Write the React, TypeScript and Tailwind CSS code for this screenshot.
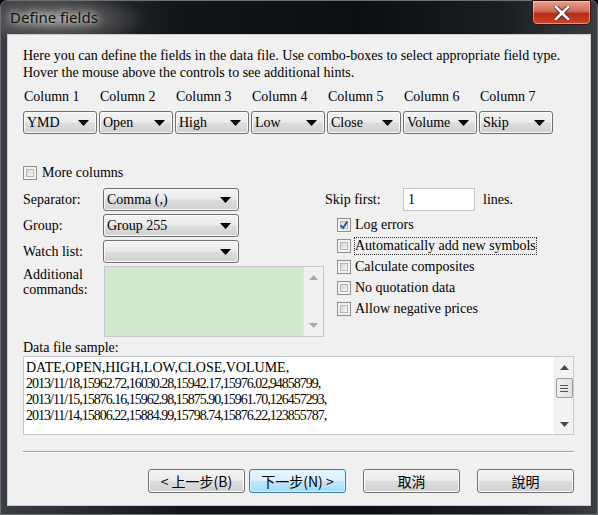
import React from "react";

const comboBg =
  "bg-[linear-gradient(to_bottom,#f3f3f3_0%,#ebebeb_48%,#dddddd_52%,#d0d0d0_100%)]";

function Arrow() {
  return (
    <svg width="11" height="6" viewBox="0 0 11 6" className="ml-auto mr-[7px] shrink-0">
      <path d="M0 0 H11 L5.5 6 Z" fill="#000" />
    </svg>
  );
}

function Combo({ value, className = "" }: { value: string; className?: string }) {
  return (
    <div
      className={`flex h-[23px] items-center rounded-[3px] border border-[#707070] ${comboBg} shadow-[inset_0_0_0_1px_#fbfbfb] pl-[3px] text-[14px] leading-none ${className}`}
    >
      <span className="whitespace-nowrap">{value}</span>
      <Arrow />
    </div>
  );
}

function CheckBox({ checked = false }: { checked?: boolean }) {
  return (
    <div className="relative h-[14px] w-[14px] shrink-0 border border-[#8e8f8f] bg-[#f4f4f4]">
      <div className="absolute inset-[2px] border border-[#b8b8b8] bg-[linear-gradient(135deg,#d5d5d5,#f6f6f6)]" />
      {checked && (
        <svg viewBox="0 0 14 14" className="absolute inset-0 h-full w-full">
          <path d="M3 7.5 L5.8 10.5 L11 3" stroke="#2d4f9e" strokeWidth="2.2" fill="none" />
        </svg>
      )}
    </div>
  );
}

function Check({ label, checked, focus }: { label: string; checked?: boolean; focus?: boolean }) {
  return (
    <div className="flex h-[21px] items-center">
      <CheckBox checked={checked} />
      <span
        className={`ml-[4px] whitespace-nowrap text-[14px] leading-[16px] ${
          focus ? "outline outline-1 outline-dotted outline-[#333]" : ""
        }`}
      >
        {label}
      </span>
    </div>
  );
}

function Btn({ label, primary = false }: { label: string; primary?: boolean }) {
  return (
    <div
      className={`flex h-[24px] w-[97px] items-center justify-center rounded-[3px] border text-[14px] font-['Noto_Sans_CJK_TC',sans-serif] ${
        primary
          ? "border-[#3c7fb1] bg-[linear-gradient(to_bottom,#eaf6fd_0%,#d9f0fc_48%,#bee6fd_52%,#a7d9f5_100%)] shadow-[inset_0_0_0_1px_#d2f1ff]"
          : `border-[#707070] ${comboBg} shadow-[inset_0_0_0_1px_#fbfbfb]`
      }`}
    >
      {label}
    </div>
  );
}

export default function App() {
  const cols = [
    ["Column 1", "YMD"],
    ["Column 2", "Open"],
    ["Column 3", "High"],
    ["Column 4", "Low"],
    ["Column 5", "Close"],
    ["Column 6", "Volume"],
    ["Column 7", "Skip"],
  ];

  return (
    <div className="h-[515px] w-[598px] overflow-hidden bg-black font-['Liberation_Serif','Noto_Sans_CJK_TC',serif] text-black">
      <div className="flex h-full w-full flex-col rounded-t-[7px] border border-[#6c7074] bg-[radial-gradient(ellipse_95px_26px_at_52px_18px,#8d8d8d_0%,#555_45%,transparent_100%),linear-gradient(to_right,#3b3e42_0%,#121519_30%,#0b0e12_60%,#1b1e22_85%,#3a3d41_100%)]">
        {/* title bar */}
        <div className="flex h-[33px] shrink-0 items-start">
          <div className="ml-[9px] mt-[6px] font-['Noto_Sans',sans-serif] text-[15px] leading-[20px] text-[#111] [text-shadow:0_0_6px_#ddd,0_0_10px_#bbb]">
            Define fields
          </div>
          <div className="ml-auto mr-[6px] mt-[-1px] flex h-[25px] w-[59px] items-center justify-center rounded-b-[5px] border border-[#3b0f0a] bg-[linear-gradient(to_bottom,#e8a491_0%,#cf6a55_45%,#b62b12_55%,#c8462b_100%)] shadow-[inset_0_0_0_1px_rgba(255,220,210,0.5)]">
            <svg width="16" height="14" viewBox="0 0 16 14">
              <path d="M2 1 L14 13 M14 1 L2 13" stroke="#3a1a14" strokeWidth="4.4" strokeLinecap="square" />
              <path d="M2 1 L14 13 M14 1 L2 13" stroke="#fff" strokeWidth="2.8" strokeLinecap="square" />
            </svg>
          </div>
        </div>

        {/* client */}
        <div className="ml-[6px] h-[472px] w-[584px] border border-[#c9cdd2] bg-[#f0f0f0] pl-[15px] pr-[17px] pt-[12px]">
          <p className="text-[14px] leading-[17px]">
            Here you can define the fields in the data file. Use combo-boxes to select appropriate field type.
            <br />
            Hover the mouse above the controls to see additional hints.
          </p>

          <div className="mt-[7px] grid grid-cols-[repeat(7,74px)] gap-x-[2px]">
            {cols.map(([l]) => (
              <div key={l} className="h-[17px] pl-[1px] text-[14px] leading-[17px] whitespace-nowrap">
                {l}
              </div>
            ))}
          </div>
          <div className="mt-[6px] grid grid-cols-[repeat(7,74px)] gap-x-[2px]">
            {cols.map(([l, v]) => (
              <Combo key={l} value={v} />
            ))}
          </div>

          <div className="mt-[31px] flex h-[15px] items-center">
            <CheckBox />
            <span className="ml-[5px] text-[14px] leading-[15px]">More columns</span>
          </div>

          <div className="mt-[8px] flex">
            {/* left */}
            <div className="w-[301px] shrink-0">
              {[
                ["Separator:", "Comma (,)"],
                ["Group:", "Group 255"],
                ["Watch list:", ""],
              ].map(([l, v]) => (
                <div key={l} className="mb-[3px] flex items-center">
                  <span className="w-[80px] text-[14px]">{l}</span>
                  <Combo value={v} className="w-[136px]" />
                </div>
              ))}
              <div className="mt-[2px] flex">
                <div className="w-[81px] pt-[1px] text-[14px] leading-[15px]">
                  Additional
                  <br />
                  commands:
                </div>
                <div className="flex h-[71px] w-[220px] border border-[#c4c7cc]">
                  <div className="flex-1 bg-[#d1e8cf]" />
                  <div className="flex w-[20px] flex-col items-center justify-between border-l border-[#e4e4e4] bg-[#f0f0f0] py-[8px]">
                    <svg width="9" height="5" viewBox="0 0 9 5">
                      <path d="M0 5 L4.5 0 L9 5 Z" fill="#a8a8a8" />
                    </svg>
                    <svg width="9" height="5" viewBox="0 0 9 5">
                      <path d="M0 0 L9 0 L4.5 5 Z" fill="#a8a8a8" />
                    </svg>
                  </div>
                </div>
              </div>
            </div>

            {/* right */}
            <div className="flex-1">
              <div className="flex h-[23px] items-center">
                <span className="w-[79px] pl-[1px] text-[14px]">Skip first:</span>
                <div className="flex h-[23px] w-[72px] items-center border border-[#c2c5ca] bg-white pl-[4px] text-[14px]">
                  1
                </div>
                <span className="ml-[8px] text-[14px]">lines.</span>
              </div>
              <div className="ml-[13px] mt-[3px] flex flex-col">
                <Check label="Log errors" checked />
                <Check label="Automatically add new symbols" focus />
                <Check label="Calculate composites" />
                <Check label="No quotation data" />
                <Check label="Allow negative prices" />
              </div>
            </div>
          </div>

          <div className="mt-[2px] text-[14px] leading-[17px]">Data file sample:</div>
          <div className="flex h-[79px] w-[551px] border border-[#c4c7cc] bg-white">
            <div className="flex-1 pl-[2px] pt-[3px] leading-[16px]">
              <div className="text-[14px]">DATE,OPEN,HIGH,LOW,CLOSE,VOLUME,</div>
              <div className="text-[14px] tracking-[-1px]">2013/11/18,15962.72,16030.28,15942.17,15976.02,94858799,</div>
              <div className="text-[14px] tracking-[-1px]">2013/11/15,15876.16,15962.98,15875.90,15961.70,126457293,</div>
              <div className="text-[14px] tracking-[-1px]">2013/11/14,15806.22,15884.99,15798.74,15876.22,123855787,</div>
            </div>
            <div className="flex w-[19px] flex-col items-center border-l border-[#ececec] bg-[#f3f3f3] pt-[8px] pb-[7px]">
              <svg width="9" height="5" viewBox="0 0 9 5">
                <path d="M0 5 L4.5 0 L9 5 Z" fill="#4a4a4a" />
              </svg>
              <div className="mt-[8px] flex h-[20px] w-[17px] flex-col items-center justify-center gap-[2px] rounded-[2px] border border-[#979797] bg-[linear-gradient(to_right,#f2f2f2,#e0e0e0)]">
                <div className="h-px w-[8px] bg-[#555]" />
                <div className="h-px w-[8px] bg-[#555]" />
                <div className="h-px w-[8px] bg-[#555]" />
              </div>
              <svg width="9" height="5" viewBox="0 0 9 5" className="mt-auto">
                <path d="M0 0 L9 0 L4.5 5 Z" fill="#4a4a4a" />
              </svg>
            </div>
          </div>

          <div className="mt-[16px] h-px w-[551px] bg-[#a0a0a0] shadow-[0_1px_0_#fff]" />

          <div className="mt-[17px] flex w-[551px]">
            <div className="ml-[125px] flex gap-[4px]">
              <Btn label="< 上一步(B)" />
              <Btn label="下一步(N) >" primary />
            </div>
            <div className="ml-[17px]">
              <Btn label="取消" />
            </div>
            <div className="ml-[17px]">
              <Btn label="說明" />
            </div>
          </div>
        </div>
      </div>
    </div>
  );
}
